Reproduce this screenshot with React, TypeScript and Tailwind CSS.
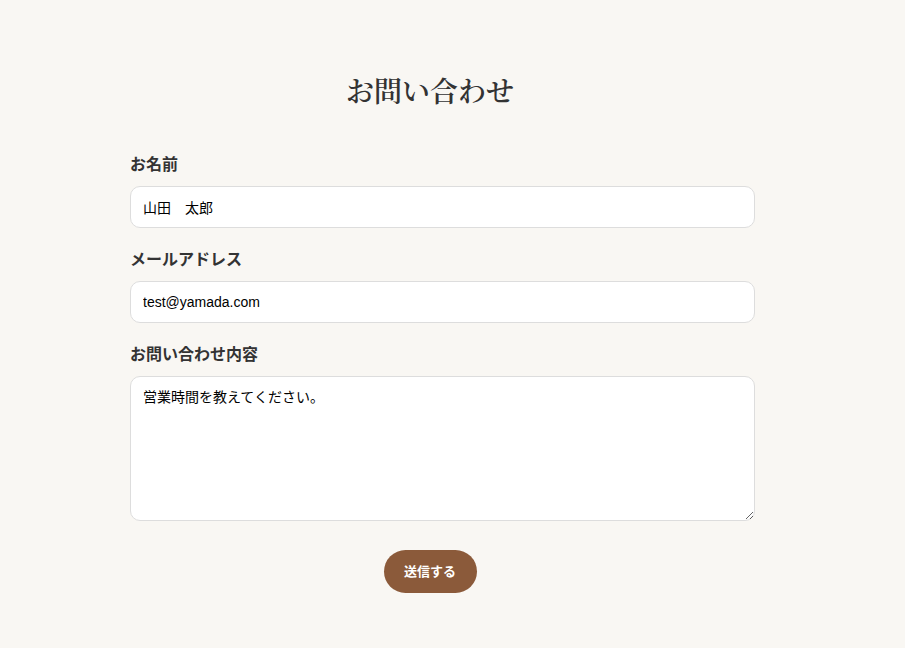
export default function App() {
  return (
    <div className="min-h-[648px] bg-[#f9f7f3] text-[#333] [font-family:'Liberation_Sans','Noto_Sans_CJK_JP',sans-serif]">
      <div className="ml-[130px] w-[600px] pt-[70px]">
        <h1 className="mb-[43px] text-center text-[28px] leading-[40px] font-semibold text-[#333] [font-family:'Noto_Serif_CJK_JP','Liberation_Serif','Noto_Sans_CJK_JP',serif]">
          お問い合わせ
        </h1>
        <form className="flex flex-col" onSubmit={(e) => e.preventDefault()}>
          <div className="mb-[20px]">
            <label className="mb-[9px] block text-[16px] leading-[24px] font-bold">お名前</label>
            <input
              defaultValue="山田　太郎"
              className="h-[42px] w-[625px] rounded-[10px] border border-[#ddd] bg-white px-[12px] text-[14px] text-black outline-none"
            />
          </div>
          <div className="mb-[20px]">
            <label className="mb-[9px] block text-[16px] leading-[24px] font-bold">メールアドレス</label>
            <input
              defaultValue="test@yamada.com"
              className="h-[42px] w-[625px] rounded-[10px] border border-[#ddd] bg-white px-[12px] text-[14px] text-black outline-none"
            />
          </div>
          <div className="mb-[29px]">
            <label className="mb-[9px] block text-[16px] leading-[24px] font-bold">お問い合わせ内容</label>
            <textarea
              defaultValue="営業時間を教えてください。"
              className="block h-[145px] w-[625px] rounded-[10px] border border-[#ddd] bg-white px-[12px] py-[10px] text-[14px] leading-[20px] text-black outline-none"
            />
          </div>
          <div className="flex justify-center">
            <button className="h-[43px] w-[93px] rounded-full bg-[#8b5a3a] text-[13px] font-bold text-white">送信する</button>
          </div>
        </form>
      </div>
    </div>
  )
}
